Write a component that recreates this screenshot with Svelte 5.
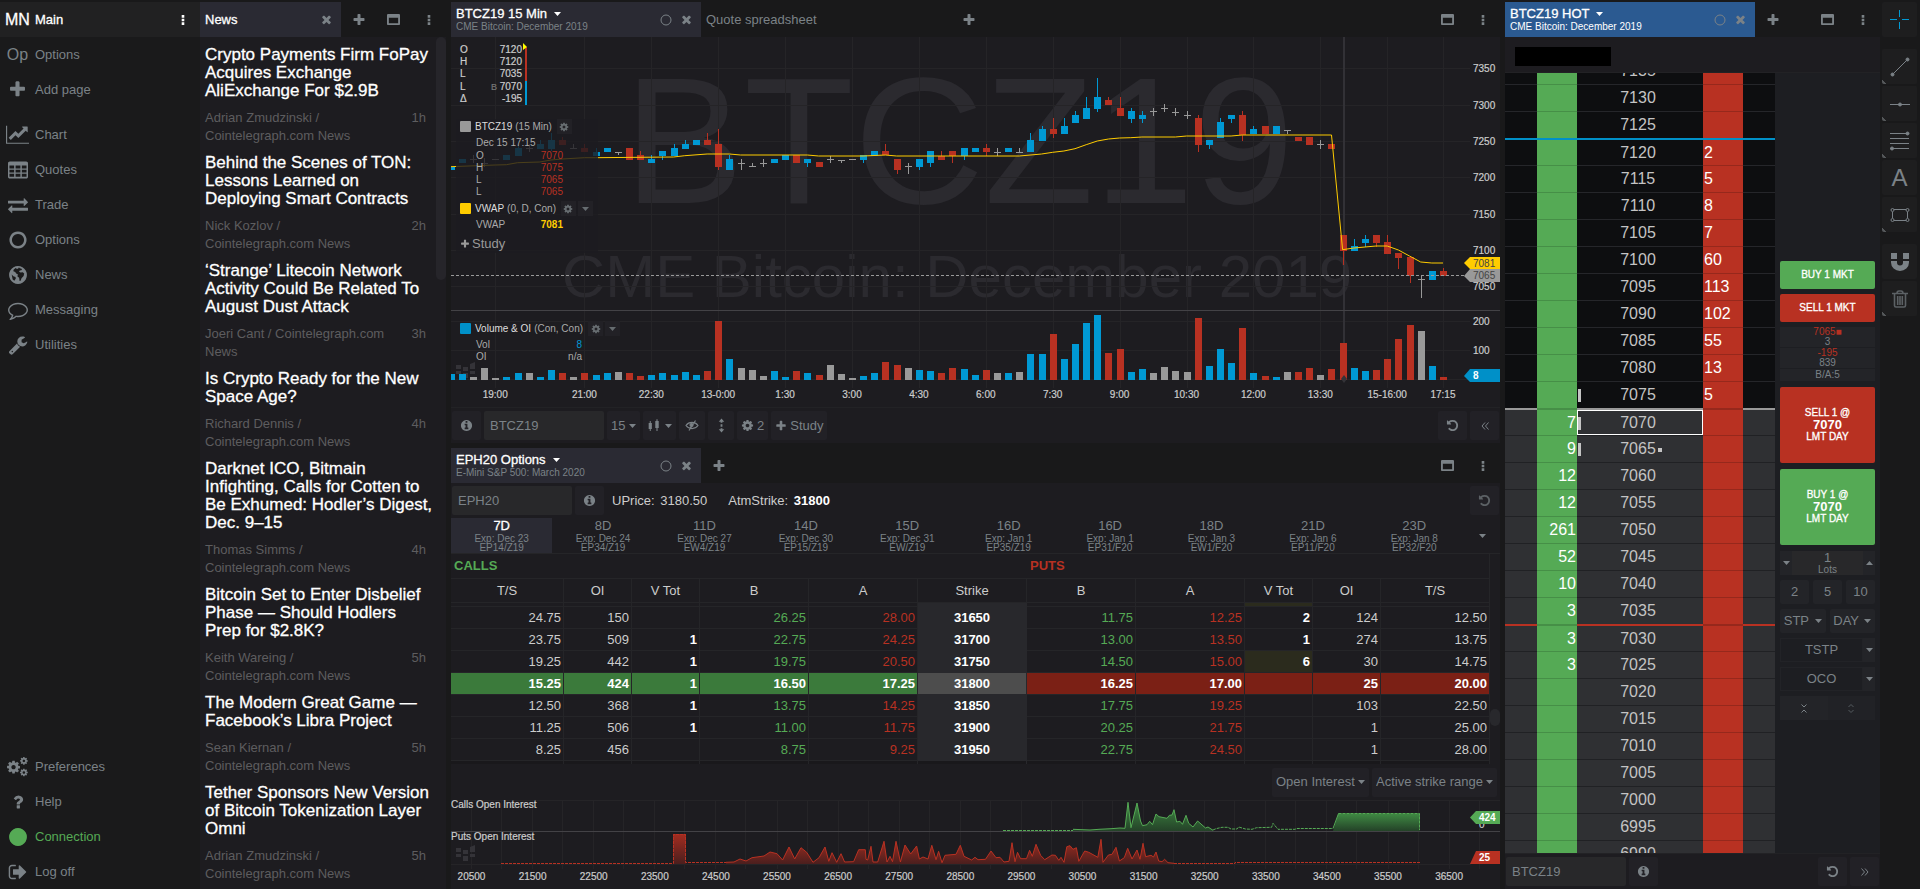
<script lang="ts">
	type Candle = { x: number; tone: string; top: number; bottom: number; high: number; low: number; vol: number };

	const icons: Record<string, string> = {
		plus: 'M1600 736v192q0 40-28 68t-68 28h-416v416q0 40-28 68t-68 28h-192q-40 0-68-28t-28-68v-416h-416q-40 0-68-28t-28-68v-192q0-40 28-68t68-28h416v-416q0-40 28-68t68-28h192q40 0 68 28t28 68v416h416q40 0 68 28t28 68z',
		times: 'M1490 1322q0 40-28 68l-136 136q-28 28-68 28t-68-28l-294-294-294 294q-28 28-68 28t-68-28l-136-136q-28-28-28-68t28-68l294-294-294-294q-28-28-28-68t28-68l136-136q28-28 68-28t68 28l294 294 294-294q28-28 68-28t68 28l136 136q28 28 28 68t-28 68l-294 294 294 294q28 28 28 68z',
		window: 'M256 1408h1280v-768h-1280v768zm1536-1120v1216q0 66-47 113t-113 47h-1472q-66 0-113-47t-47-113v-1216q0-66 47-113t113-47h1472q66 0 113 47t47 113z',
		more: 'M700 160h390v390h-390zM700 700h390v390h-390zM700 1240h390v390h-390z',
		chart: 'M1792 1530v90h-1792v-1400h90v1310zM1690 310v380q0 18-17 26t-31-7l-106-106-554 554q-9 9-20 9t-20-9l-204-204-364 364-168-168 512-512q9-9 20-9t20 9l204 204 406-406-106-106q-14-14-7-31t26-17h381q12 0 20 8t8 20z',
		table: 'M160 128h1472q66 0 113 47t47 113v1216q0 66-47 113t-113 47h-1472q-66 0-113-47t-47-113v-1216q0-66 47-113t113-47zM130 500v260h420v-260zM680 500v260h430v-260zM1240 500v260h420v-260zM130 880v240h420v-240zM680 880v240h430v-240zM1240 880v240h420v-240zM130 1240v270h420v-270zM680 1240v270h430v-270zM1240 1240v270h420v-270z',
		exchange: 'M1792 1184v192q0 13-9.5 22.5t-22.5 9.5h-1376v192q0 13-9.5 22.5t-22.5 9.5q-12 0-24-10l-319-320q-9-9-9-22 0-14 9-23l320-320q9-9 23-9 13 0 22.5 9.5t9.5 22.5v192h1376q13 0 22.5 9.5t9.5 22.5zm0-544q0 14-9 23l-320 320q-9 9-23 9-13 0-22.5-9.5t-9.5-22.5v-192h-1376q-13 0-22.5-9.5t-9.5-22.5v-192q0-13 9.5-22.5t22.5-9.5h1376v-192q0-14 9-23t23-9q12 0 24 10l319 319q9 9 9 23z',
		ring: 'M896 352q-148 0-273 73t-198 198-73 273 73 273 198 198 273 73 273-73 198-198 73-273-73-273-198-198-273-73zm768 544q0 209-103 385.5t-279.5 279.5-385.5 103-385.5-103-279.5-279.5-103-385.5 103-385.5 279.5-279.5 385.5-103 385.5 103 279.5 279.5 103 385.5z',
		globe: 'M896 96a800 800 0 1 0 .1 0zM1010 260l250 90-60 130-150 10-60 110 140 70 190-30 130 130-50 210-190 200-80 230-90 20-40-280-150-130 30-200-150-60-80-130-170-60 20-150 180-160 130 90 130-50 50-130zM330 860l150 150 190 70 30 130-130 200-150-110z',
		comment: 'M896 384q-204 0-381.5 69.5t-282 187.5-104.5 255q0 112 71.5 213.5t201.5 175.5l87 50-27 96q-24 91-70 172 152-63 275-171l43-38 57 6q69 8 130 8 204 0 381.5-69.5t282-187.5 104.5-255-104.5-255-282-187.5-381.5-69.5zm896 512q0 174-120 321.5t-326 233-450 85.5q-70 0-145-8-198 175-460 242-49 14-114 22h-5q-15 0-27-10.5t-16-27.5v-1q-3-4-.5-12t2-10 4.5-9.5l6-9 7-8.5 8-9q7-8 31-34.5t34.5-38 31-39.5 32.5-51 27-59 26-76q-157-89-247.5-220t-90.5-281q0-174 120-321.5t326-233 450-85.5 450 85.5 326 233 120 321.5z',
		wrench: 'M448 1472q0-26-19-45t-45-19-45 19-19 45 19 45 45 19 45-19 19-45zm644-420l-682 682q-37 37-90 37-52 0-91-37l-106-108q-38-36-38-90 0-53 38-91l681-681q39 98 114.5 173.5t173.5 114.5zm634-435q0 39-23 106-47 134-164.5 217.5t-258.5 83.5q-185 0-316.5-131.5t-131.5-316.5 131.5-316.5 316.5-131.5q58 0 121.5 16.5t107.5 46.5q16 11 16 28t-16 28l-293 169v224l193 107q5-3 79-48.5t135.5-81 70.5-35.5q15 0 23.5 10t8.5 25z',
		cog: 'M1152 896q0-106-75-181t-181-75-181 75-75 181 75 181 181 75 181-75 75-181zm512-109v222q0 12-8 23t-20 13l-185 28q-19 54-39 91 35 50 107 138 10 12 10 25t-9 23q-27 37-99 108t-94 71q-12 0-26-9l-138-108q-44 23-91 38-16 136-29 186-7 28-36 28h-222q-14 0-24.5-8.5t-11.5-21.5l-28-184q-49-16-90-37l-141 107q-10 9-25 9-14 0-25-11-126-114-165-168-7-10-7-23 0-12 8-23 15-21 51-66.5t54-70.5q-27-50-41-99l-183-27q-13-2-21-12.5t-8-23.5v-222q0-12 8-23t19-13l186-28q14-46 39-92-40-57-107-138-10-12-10-24 0-10 9-23 26-36 98.5-107.5t94.5-71.5q13 0 26 10l138 107q44-23 91-38 16-136 29-186 7-28 36-28h222q14 0 24.5 8.5t11.5 21.5l28 184q49 16 90 37l142-107q9-9 24-9 13 0 25 10 129 119 165 170 7 8 7 22 0 12-8 23-15 21-51 66.5t-54 70.5q26 50 41 98l183 28q13 2 21 12.5t8 23.5z',
		question: 'M1088 1256v240q0 16-12 28t-28 12h-240q-16 0-28-12t-12-28v-240q0-16 12-28t28-12h240q16 0 28 12t12 28zm316-600q0 54-15.5 101t-35 76.5-55 59.5-57.5 43.5-61 35.5q-41 23-68.5 65t-27.5 67q0 17-12 32.5t-28 15.5h-240q-15 0-25.5-18.5t-10.5-37.5v-45q0-83 65-156.5t143-108.5q59-27 84-56t25-76q0-42-46.5-74t-107.5-32q-65 0-108 29-35 25-107 115-13 16-31 16-12 0-25-8l-164-125q-13-10-15.5-25t5.5-28q160-266 464-266 80 0 161 31t146 83 106 127.5 41 158.5z',
		dot: 'M896 96a800 800 0 1 0 .1 0z',
		logoff: 'M704 1440q0 4 1 20t.5 26.5-3 23.5-10 19.5-20.5 6.5h-320q-119 0-203.5-84.5t-84.5-203.5v-704q0-119 84.5-203.5t203.5-84.5h320q13 0 22.5 9.5t9.5 22.5q0 4 1 20t.5 26.5-3 23.5-10 19.5-20.5 6.5h-320q-66 0-113 47t-47 113v704q0 66 47 113t113 47h312l11.5 1 11.5 3 8 5.5 7 9 2 13.5zm928-544q0 26-19 45l-544 544q-19 19-45 19t-45-19-19-45v-288h-448q-26 0-45-19t-19-45v-384q0-26 19-45t45-19h448v-288q0-26 19-45t45-19 45 19l544 544q19 19 19 45z',
		undo: 'M1664 896q0 156-61 298t-164 245-245 164-298 61q-172 0-327-72.5t-264-204.5q-7-10-6.5-22.5t8.5-20.5l137-138q10-9 25-9 16 2 23 12 73 95 179 147t225 52q104 0 198.5-40.5t163.5-109.5 109.5-163.5 40.5-198.5-40.5-198.5-109.5-163.5-163.5-109.5-198.5-40.5q-98 0-188 35.5t-160 101.5l137 138q31 30 14 69-17 40-59 40h-448q-26 0-45-19t-19-45v-448q0-42 40-59 39-17 69 14l130 129q107-101 244.5-156.5t284.5-55.5q156 0 298 61t245 164 164 245 61 298z',
		info: 'M1152 1376v-160q0-14-9-23t-23-9h-96v-512q0-14-9-23t-23-9h-320q-14 0-23 9t-9 23v160q0 14 9 23t23 9h96v320h-96q-14 0-23 9t-9 23v160q0 14 9 23t23 9h448q14 0 23-9t9-23zm-128-896v-160q0-14-9-23t-23-9h-192q-14 0-23 9t-9 23v160q0 14 9 23t23 9h192q14 0 23-9t9-23zm640 416q0 209-103 385.5t-279.5 279.5-385.5 103-385.5-103-279.5-279.5-103-385.5 103-385.5 279.5-279.5 385.5-103 385.5 103 279.5 279.5 103 385.5z',
		bars: 'M330 350h120v250h130v700h-130v250h-120v-250h-130v-700h130zM1130 150h130v200h140v850h-140v350h-130v-350h-140v-850h140z',
		updown: 'M896 60l330 380h-220v140h-220v-140h-220zM786 760h220v280h-220zM786 1210h220v140h220l-330 380-330-380h220z'
	};

	const pages = [
		{ icon: 'chart', label: 'Chart' },
		{ icon: 'table', label: 'Quotes' },
		{ icon: 'exchange', label: 'Trade' },
		{ icon: 'ring', label: 'Options' },
		{ icon: 'globe', label: 'News' },
		{ icon: 'comment', label: 'Messaging' },
		{ icon: 'wrench', label: 'Utilities' }
	];

	const news = [
		['Crypto Payments Firm FoPay Acquires Exchange AliExchange For $2.9B', 'Adrian Zmudzinski', '1h'],
		['Behind the Scenes of TON: Lessons Learned on Deploying Smart Contracts', 'Nick Kozlov', '2h'],
		['‘Strange’ Litecoin Network Activity Could Be Related To August Dust Attack', 'Joeri Cant', '3h'],
		['Is Crypto Ready for the New Space Age?', 'Richard Dennis', '4h'],
		['Darknet ICO, Bitmain Infighting, Calls for Cotten to Be Exhumed: Hodler’s Digest, Dec. 9–15', 'Thomas Simms', '4h'],
		['Bitcoin Set to Enter Disbelief Phase — Should Hodlers Prep for $2.8K?', 'Keith Wareing', '5h'],
		['The Modern Great Game — Facebook’s Libra Project', 'Sean Kiernan', '5h'],
		['Tether Sponsors New Version of Bitcoin Tokenization Layer Omni', 'Adrian Zmudzinski', '5h']
	];

	// tone, body top, body bottom, wick high, wick low, volume top; levels are in thirds of a pixel
	const raw = `b 500 510 500 510 1122|b 477 489 477 489 1122|g 478 478 466 490 1131|g 488 488 475 500 1104|g 478 478 478 478 1134
|b 466 479 466 479 1131|b 444 468 435 468 1119|g 445 445 432 456 1119|b 432 446 420 446 1131|b 420 447 400 453 1110
|r 420 434 412 434 1119|g 444 444 432 444 1131|r 444 456 432 456 1119|b 455 468 444 468 1125|b 444 456 444 456 1119
|g 455 455 455 466 1116|r 444 480 444 480 1119|r 466 479 454 479 1128|b 477 489 466 489 1125|b 453 468 453 480 1119
|b 444 468 432 468 1125|b 432 447 420 447 1116|b 420 435 420 435 1125|r 420 435 399 435 1113|r 432 500 387 510 963
|b 477 510 466 510 1077|g 488 488 478 510 1104|g 499 499 488 499 1110|g 488 488 478 500 1128|b 477 489 477 489 1113
|b 466 480 466 480 1131|r 466 489 466 489 1113|b 477 489 477 501 1119|r 487 501 487 501 1125|g 478 478 467 489 1095
|g 479 479 479 488 1122|g 478 478 478 478 1134|b 466 480 466 489 1128|b 453 467 453 467 1119|r 453 466 432 466 1086
|r 477 510 477 521 1095|g 499 499 488 521 1104|b 477 500 477 510 1110|b 453 489 453 500 1113|r 467 480 454 480 1119
|r 453 467 453 489 1104|b 444 467 444 480 1107|b 444 456 444 456 1125|r 444 456 432 467 1110|g 455 455 444 467 1119
|b 444 456 444 456 1119|g 455 455 444 455 1116|b 420 456 399 456 1062|b 387 423 378 423 1062|r 387 402 354 414 1002
|b 378 402 354 402 1077|b 345 369 333 369 1032|b 324 357 291 357 969|b 291 327 234 336 945|r 300 315 291 315 1059
|r 324 348 291 348 1047|b 333 357 324 369 1116|b 345 357 333 369 1107|g 334 334 324 347 1119|g 324 324 312 335 1101
|g 335 335 324 347 1113|g 346 346 333 357 1116|r 354 435 345 456 954|b 420 435 420 447 1098|b 366 414 354 414 1047
|b 345 357 345 369 1089|r 345 405 333 423 984|b 387 402 378 402 1119|r 378 402 378 402 1128|b 378 402 378 402 1131
|g 389 389 389 402 1116|r 411 423 411 423 1116|r 411 435 411 435 1104|g 433 433 421 447 1125|r 432 447 432 447 1107
|r 705 753 705 795 1029|b 738 753 717 753 1104|b 717 729 705 740 1113|r 705 729 705 740 1110|r 726 762 705 762 1077
|r 759 774 759 807 1017|r 771 828 771 849 975|g 838 838 826 894 993|b 813 840 813 840 1098|r 813 828 804 828 1131`;

	const slot = (i: number) => 44.2 + 11.15 * i;
	const level = (v: number) => Math.round(v / 3) - 37;

	const candles: Candle[] = raw.split('|').map((row, n) => {
		const [tone, ...v] = row.trim().split(' ');
		const [top, bottom, high, low, vol] = v.map((s) => level(Number(s)));
		return { x: Math.round(slot(n - 4)), tone, top, bottom, high, low, vol };
	});

	const vwap = [
		[-4, 500], [0, 495], [1, 494], [2, 488], [4, 486], [5, 480], [6, 477], [8, 473], [9, 473], [16, 471], [17, 467], [19, 462],
		[21, 462], [22, 465], [28, 465], [29, 468], [33, 468], [35, 465], [36, 468], [47, 468], [49, 462], [50, 457], [51, 453],
		[52, 446], [53, 434], [54, 423], [55, 417], [56, 414], [57, 413], [58, 411], [61, 411], [62, 408], [66, 408], [67, 405],
		[75, 405], [76, 749], [77, 744], [79, 738], [80, 738], [81, 750], [82, 768], [83, 786], [84, 789], [85, 789]
	]
		.map(([i, v]) => `${slot(i).toFixed(1)},${(v / 3 - 37).toFixed(1)}`)
		.join(' ');

	const times: [string, number][] = [
		['19:00', 0], ['21:00', 8], ['22:30', 14], ['13-0:00', 20], ['1:30', 26], ['3:00', 32], ['4:30', 38], ['6:00', 44],
		['7:30', 50], ['9:00', 56], ['10:30', 62], ['12:00', 68], ['13:30', 74], ['15-16:00', 80], ['17:15', 85]
	];
	const prices = [7350, 7300, 7250, 7200, 7150, 7100, 7050];

	const expiries = [
		['7D', 'Dec 23', 'EP14/Z19'], ['8D', 'Dec 24', 'EP34/Z19'], ['11D', 'Dec 27', 'EW4/Z19'], ['14D', 'Dec 30', 'EP15/Z19'],
		['15D', 'Dec 31', 'EW/Z19'], ['16D', 'Jan 1', 'EP35/Z19'], ['16D', 'Jan 1', 'EP31/F20'], ['18D', 'Jan 3', 'EW1/F20'],
		['21D', 'Jan 6', 'EP11/F20'], ['23D', 'Jan 8', 'EP32/F20']
	];

	const heads = ['T/S', 'OI', 'V Tot', 'B', 'A', 'Strike', 'B', 'A', 'V Tot', 'OI', 'T/S'];
	const kinds = ['', '', 'vol', 'bid', 'ask', 'strike', 'bid', 'ask', 'vol', '', ''];
	const chain = [
		['24.75', '150', '', '26.25', '28.00', '31650', '11.75', '12.25', '2', '124', '12.50'],
		['23.75', '509', '1', '22.75', '24.25', '31700', '13.00', '13.50', '1', '274', '13.75'],
		['19.25', '442', '1', '19.75', '20.50', '31750', '14.50', '15.00', '6', '30', '14.75'],
		['15.25', '424', '1', '16.50', '17.25', '31800', '16.25', '17.00', '', '25', '20.00'],
		['12.50', '368', '1', '13.75', '14.25', '31850', '17.75', '19.25', '', '103', '22.50'],
		['11.25', '506', '1', '11.00', '11.75', '31900', '20.25', '21.75', '', '1', '25.00'],
		['8.25', '456', '', '8.75', '9.25', '31950', '22.75', '24.50', '', '1', '28.00']
	];

	const callsDash = '552,30.5 622,30.5';
	const callsLine =
		'622,29.3 639,30 648,29.3 660,28.7 669,28 674,28.3 677,2.3 680,27.7 686,3 689.5,21 691.5,25.7 696,24.7 698.7,21.3 701.5,24.7 705,14 708,16.7 716,18.3 718.4,15.3 721,15 723,9.7 725.6,22 729,21.3 731.5,24.3 735,15.3 737.7,23.3 742,27 746.6,21 754.5,28 757,27 762,30.3';
	const callsDash2 =
		'762,30 765,28.7 771,27.3 777,27.3 780,29 786,29 787.6,27 794.5,29 801,29.3 805.5,27.7 820.6,27.3 822,23.3 827,29.3 844,29.3 846,28.5 882,28.5';
	const putsDash = '50,63.5 222.5,63.5 222.5,34.5 234.5,34.5 234.5,62.5 275,62.5';
	const putsLine =
		'275,62.3 283,62 289,59 295,61 301,57.7 313,56 319,52 326,53.7 331.6,60 338,47 343.7,59 350,47.7 355.7,52.3 362,62.3 368,57.7 374,47 377.8,61.3 381,52.7 385.7,62.3 390,53.7 393.6,62 402.6,61.7 407.7,49.7 414.3,49.7 415,59.3 416.7,60 420,46.3 422,62 426.7,62 433,41.3 436,62 439,56.3 441.5,61.7 445,41.3 449.4,62 454,45 459.7,54 465.6,46 468.4,59 472,57 477,59 480.8,45.3 485,59.7 487.6,51.3 491,62.7 494,55.3 505,54.3 509.3,45.3 513,56.3 520.7,60 524,57.3 527,59.7 534.5,59.3 540,51 545,57.7 549,57.3 553,62 558,61.3 561,42.7 564,61.7 566.5,52.3 569.6,58.7 575.5,58.7 578.6,50.3 581.3,56.3 585,44.3 589.6,55.3 593.7,59.7 601,55 604.4,55.3 607.8,60.3 610,57.3 613,62.3 615.8,46.7 619,45.7 622,49.3 625.4,47.7 627.8,61.3 633.7,51 637.8,52.3 645,56.3 646.8,57.3 650,39.3 652,62.3 657.4,55 661,54.3 665,47.3 668.4,61 673.3,57.7 676.7,48.3 681,59 686,50 689,59.3 692,43.3 694.6,56.7 700,55.3 702.5,57 705,52 707.7,61 711,61.7 713.6,59.3 717,62.7 723,63.3';
	const strikes = Array.from({ length: 17 }, (_, k) => 20500 + k * 1000);

	const asks: Record<number, string> = { 7120: '2', 7115: '5', 7110: '8', 7105: '7', 7100: '60', 7095: '113', 7090: '102', 7085: '55', 7080: '13', 7075: '5' };
	const bids: Record<number, string> = { 7070: '7', 7065: '9', 7060: '12', 7055: '12', 7050: '261', 7045: '52', 7040: '10', 7035: '3', 7030: '3', 7025: '3' };
	const ladder = Array.from({ length: 30 }, (_, k) => 7135 - k * 5);
</script>

{#snippet icon(name: string, size: number)}
	<svg class="icon" width={size} height={size} viewBox="0 0 1792 1792" aria-hidden="true">
		<path d={icons[name]} fill="currentColor" fill-rule="evenodd" />
	</svg>
{/snippet}

{#snippet cogs()}
	<svg class="icon" width="22" height="20" viewBox="0 0 22 20" fill="currentColor" fill-rule="evenodd" aria-hidden="true">
		<path transform="translate(-1 2.6) scale(.0084)" d={icons.cog} />
		<path transform="translate(12.4 -.6) scale(.005)" d={icons.cog} />
		<path transform="translate(12.4 11) scale(.005)" d={icons.cog} />
	</svg>
{/snippet}

{#snippet caret()}
	<svg class="icon" width="7" height="4" viewBox="0 0 7 4" aria-hidden="true"><path d="M0 0h7L3.500 4z" fill="currentColor" /></svg>
{/snippet}

{#snippet iconButton(name: string, label: string, size = 14)}
	<button class="head-btn" aria-label={label}>{@render icon(name, size)}</button>
{/snippet}

{#snippet symbolTab(title: string, sub: string, active: boolean)}
	<div class="tab" class:active>
		<button class="symbol-name">
			<span class="title">{title} {@render caret()}</span>
			<span class="sub">{sub}</span>
		</button>
		<button class="bare" aria-label="Link colour">
			<svg class="icon" width="12" height="12" viewBox="0 0 12 12"><circle cx="6" cy="6" r="5" fill="none" stroke="currentColor" /></svg>
		</button>
		<button class="bare" aria-label="Close">{@render icon('times', 13)}</button>
	</div>
{/snippet}

{#snippet mark(x: number, y: number)}
	<path class="mark" transform="translate({x} {y})" d="M0 2h5v4H0zM0 8h5v3H0zM7 4h5v4H7zM7 10h5v5H7zM14 1l5-2v7h-5zM14 8h5v3h-5z" />
{/snippet}

<div class="app">
	<nav class="sidebar">
		<div class="side-head">
			<span class="badge">MN</span>
			<span>Main</span>
			<button class="head-btn light" aria-label="Page menu">{@render icon('more', 12)}</button>
		</div>
		<a class="side-link" href="#options"><span class="side-icon abbr">Op</span>Options</a>
		<a class="side-link" href="#add"><span class="side-icon">{@render icon('plus', 19)}</span>Add page</a>
		<div class="side-gap"></div>
		{#each pages as page}
			<a class="side-link" href="#page"><span class="side-icon">{@render icon(page.icon, page.icon === 'chart' ? 23 : 20)}</span>{page.label}</a>
		{/each}
		<div class="spacer"></div>
		<a class="side-link" href="#prefs"><span class="side-icon">{@render cogs()}</span>Preferences</a>
		<a class="side-link" href="#help"><span class="side-icon">{@render icon('question', 18)}</span>Help</a>
		<a class="side-link online" href="#connection"><span class="side-icon">{@render icon('dot', 20)}</span>Connection</a>
		<a class="side-link" href="#logoff"><span class="side-icon">{@render icon('logoff', 20)}</span>Log off</a>
	</nav>

	<section class="news">
		<header class="head">
			<div class="tab grow"><span class="title">News</span><button class="bare" aria-label="Close">{@render icon('times', 13)}</button></div>
			{@render iconButton('plus', 'Add tab')}
			{@render iconButton('window', 'Pop out', 13)}
			{@render iconButton('more', 'Menu', 12)}
		</header>
		<div class="feed">
			<div class="articles">
				{#each news as [title, author, age]}
					<article>
						<h2>{title}</h2>
						<p class="meta"><span class="source">{author} / Cointelegraph.com News</span><time>{age}</time></p>
					</article>
				{/each}
			</div>
			<div class="scrollbar"></div>
		</div>
	</section>

	<main class="center">
		<section class="panel">
			<header class="head">
				{@render symbolTab('BTCZ19 15 Min', 'CME Bitcoin: December 2019', false)}
				<button class="tab idle">Quote spreadsheet</button>
				{@render iconButton('plus', 'Add tab')}
				<span class="spacer"></span>
				{@render iconButton('window', 'Pop out', 13)}
				{@render iconButton('more', 'Menu', 12)}
			</header>

			<div class="plot">
				<svg class="plot-svg" viewBox="0 0 1049 370">
					<text class="wm big" x="508" y="166">BTCZ19</text>
					<text class="wm small" x="506" y="260">CME Bitcoin: December 2019</text>
					{#each times as [label, i]}
						<line class="grid" x1={Math.round(slot(i)) + 0.5} x2={Math.round(slot(i)) + 0.5} y1="0" y2="351" />
						<text class="axis mid" x={slot(i)} y="361">{label}</text>
					{/each}
					{#each prices as p, k}
						{@const y = Math.round(31.4 + k * 36.33)}
						<line class="grid" x1="0" x2="1019" y1={y + 0.5} y2={y + 0.5} />
						<text class="axis" x="1022" y={y + 4}>{p}</text>
					{/each}
					<line class="grid" x1="0" x2="1019" y1="284.5" y2="284.5" />
					<text class="axis" x="1022" y="288">200</text>
					<line class="grid" x1="0" x2="1019" y1="313.5" y2="313.5" />
					<text class="axis" x="1022" y="317">100</text>
					<line class="grid" x1="0" x2="1019" y1="342.5" y2="342.5" />
					<line class="session" x1="893" x2="893" y1="0" y2="341" />
					<line class="divide" x1="0" x2="1049" y1="273.5" y2="273.5" />
					{@render mark(5, 326)}
					{#each candles as c}
						<g class={c.tone}>
							<rect x={c.x} y={c.high} width="1" height={Math.max(1, c.low - c.high)} />
							<rect x={c.x - 3} y={c.top} width="7" height={Math.max(1, c.bottom - c.top)} />
							<rect x={c.x - 3} y={c.vol} width="7" height={343 - c.vol} />
						</g>
					{/each}
					<path class="pin" d="M893 338l3 4-3 4-3-4z" />
					<polyline class="vwap" points={vwap} />
					<line class="last" x1="0" x2="1013" y1="238.5" y2="238.5" />
					<path fill="#ffcc00" d="M1013 226l6-6h30v12h-30z" />
					<path fill="#999" d="M1013 239l6-7h30v13h-30z" />
					<path fill="#0090c8" d="M1013 339l6-7h30v13h-30z" />
					<text class="axis tag" x="1022" y="230">7081</text>
					<text class="axis tag" x="1022" y="242">7065</text>
					<text class="axis hot" x="1022" y="342">8</text>
				</svg>

				<div class="overlay">
					<dl class="quote">
						<dt>O</dt><dd>7120</dd>
						<dt>H</dt><dd>7120</dd>
						<dt>L</dt><dd>7035</dd>
						<dt>L</dt><dd><small>B</small> 7070</dd>
						<dt>Δ</dt><dd>-195</dd>
					</dl>
					<svg class="range" width="6" height="62" viewBox="0 0 6 62"><path fill="#b83122" d="M3 4h2v34H3z" /><path fill="#0099d4" d="M3 38h2v24H3z" /><path fill="#ff0" d="M1 0l4 4-4 3z" /></svg>
				</div>
				<div class="overlay legend prime">
					<div class="legend-head"><i class="swatch"></i><b>BTCZ19</b> (15 Min) <button class="mini" aria-label="Series settings">{@render icon('cog', 10)}</button></div>
					<div class="legend-date">Dec 15 17:15</div>
					<dl class="values loss"><dt>O</dt><dd>7070</dd><dt>H</dt><dd>7075</dd><dt>L</dt><dd>7065</dd><dt>L</dt><dd>7065</dd></dl>
					<div class="legend-head second"><i class="swatch gold"></i><b>VWAP</b> (0, D, Con) <button class="mini" aria-label="VWAP settings">{@render icon('cog', 10)}</button><button class="mini" aria-label="VWAP menu">{@render caret()}</button></div>
					<dl class="values amber"><dt>VWAP</dt><dd>7081</dd></dl>
					<button class="bare study">{@render icon('plus', 10)} Study</button>
				</div>
				<div class="overlay legend volume">
					<div class="legend-head"><i class="swatch blue"></i><b>Volume &amp; OI</b> (Con, Con) <button class="mini" aria-label="Volume settings">{@render icon('cog', 10)}</button><button class="mini" aria-label="Volume menu">{@render caret()}</button></div>
					<dl class="values wide"><dt>Vol</dt><dd class="cyan">8</dd><dt>OI</dt><dd>n/a</dd></dl>
				</div>
			</div>

			<footer class="bar">
				<button class="btn square" aria-label="Symbol info">{@render icon('info', 13)}</button>
				<input class="field" aria-label="Symbol" value="BTCZ19" />
				<span class="btn drop"><select aria-label="Interval"><option>15</option></select>{@render caret()}</span>
				<button class="btn" aria-label="Chart type">{@render icon('bars', 15)}{@render caret()}</button>
				<button class="btn" aria-label="Hide drawings">
					<svg class="icon" width="14" height="11" viewBox="0 0 14 11" fill="none" stroke="currentColor" stroke-width="1.2"><path d="M1 5.5C4 1.400 10 1.400 13 5.500 10 9.600 4 9.600 1 5.500zM10.500 .5L4 10.500" /><circle cx="6.500" cy="5" r="1.500" fill="currentColor" /></svg>
				</button>
				<button class="btn" aria-label="Auto scale">{@render icon('updown', 15)}</button>
				<button class="btn">{@render icon('cog', 13)} 2</button>
				<button class="btn">{@render icon('plus', 12)} Study</button>
				<span class="spacer"></span>
				<button class="btn square" aria-label="Reset">{@render icon('undo', 13)}</button>
				<button class="btn square" aria-label="Collapse"><svg class="icon" width="8" height="8" viewBox="0 0 8 8" fill="none" stroke="currentColor"><path d="M4 .5L1 4l3 3.500M7.500 .5l-3 3.500 3 3.500" /></svg></button>
			</footer>
		</section>

		<section class="panel">
			<header class="head">
				{@render symbolTab('EPH20 Options', 'E-Mini S&P 500: March 2020', false)}
				{@render iconButton('plus', 'Add tab')}
				<span class="spacer"></span>
				{@render iconButton('window', 'Pop out', 13)}
				{@render iconButton('more', 'Menu', 12)}
			</header>
			<div class="bar top">
				<input class="field" aria-label="Options symbol" value="EPH20" />
				<button class="btn square" aria-label="Symbol info">{@render icon('info', 13)}</button>
				<span class="stat">UPrice: <span>3180.50</span></span>
				<span class="stat">AtmStrike: <strong>31800</strong></span>
				<span class="spacer"></span>
				<button class="btn square faint" aria-label="Reset">{@render icon('undo', 13)}</button>
			</div>
			<div class="expiries">
				{#each expiries as [days, date, code], k}
					<button class="expiry" class:current={k === 0}><span class="days">{days}</span><span>Exp: {date}</span><span>{code}</span></button>
				{/each}
				<button class="expiry-more" aria-label="More expirations">{@render caret()}</button>
			</div>

			<div class="chain-wrap">
				<table class="chain">
					<colgroup>
						<col class="first" /><col class="narrow" /><col class="narrow" /><col /><col /><col /><col /><col /><col class="narrow" /><col class="narrow" /><col />
					</colgroup>
					<thead>
						<tr class="sides"><th class="calls" colspan="6">CALLS</th><th class="puts" colspan="5">PUTS</th></tr>
						<tr>{#each heads as h}<th>{h}</th>{/each}</tr>
					</thead>
					<tbody>
						<tr class="peek">{#each kinds as kind, k}<td class={kind} class:busy={k === 8}></td>{/each}</tr>
						{#each chain as row}
							<tr class:atm={row[5] === '31800'}>
								{#each row as cell, k}
									<td class={kinds[k]} class:call={k < 5} class:put={k > 5} class:busy={k === 8 && cell === '6'}>{cell}</td>
								{/each}
							</tr>
						{/each}
						<tr class="peek tail">{#each kinds as kind}<td class={kind}></td>{/each}</tr>
					</tbody>
				</table>
				<div class="thumb"></div>
			</div>

			<div class="bar filters">
				<span class="btn drop"><select aria-label="Chart metric"><option>Open Interest</option></select>{@render caret()}</span>
				<span class="btn drop"><select aria-label="Strike range"><option>Active strike range</option></select>{@render caret()}</span>
			</div>
			<svg class="interest" viewBox="0 0 1049 89">
				<defs>
					<linearGradient id="calls" x1="0" y1="0" x2="0" y2="1"><stop offset="0" stop-color="#3f8a43" /><stop offset="1" stop-color="#244228" /></linearGradient>
					<linearGradient id="puts" x1="0" y1="0" x2="0" y2="1"><stop offset="0" stop-color="#a32c20" /><stop offset="1" stop-color="#4a1f1e" /></linearGradient>
				</defs>
				<line class="grid" x1="0" x2="1049" y1="0.5" y2="0.5" />
				<line class="grid" x1="0" x2="1020" y1="64.5" y2="64.5" />
				{#each strikes as s, k}
					<line class="grid" x1={Math.round(20 + 61.1 * k) + 0.5} x2={Math.round(20 + 61.1 * k) + 0.5} y1="0" y2="69" />
					<line class="grid" x1={Math.round(50 + 61.1 * k) + 0.5} x2={Math.round(50 + 61.1 * k) + 0.5} y1="0" y2="69" />
					<text class="axis mid" x={20.5 + 61.1 * k} y="80">{s}</text>
				{/each}
				<line class="divide" x1="0" x2="1049" y1="31.5" y2="31.5" />
				<polygon fill="url(#calls)" points="622,31 {callsLine} 762,31" />
				<polygon fill="url(#calls)" points="882,31 887.5,13.5 969,13.5 969,31" />
				<polyline class="up dash" points={callsDash} />
				<polyline class="up" points={callsLine} />
				<polyline class="up dash" points={callsDash2} />
				<polyline class="up" points="882,28.5 887.5,13.5" />
				<polyline class="up dash" points="887.5,13.5 968.5,13.5 968.5,30" />
				<rect x="222" y="34" width="13" height="30" fill="url(#puts)" />
				<polygon fill="url(#puts)" points="275,64 {putsLine} 723,64" />
				<polyline class="down dash" points={putsDash} />
				<polyline class="down" points={putsLine} />
				<polyline class="down dash" points="723,63.5 784,63.5 784,62.5 969,62.5" />
				{@render mark(5, 46)}
				<text class="axis" x="0" y="8">Calls Open Interest</text>
				<text class="axis" x="0" y="40">Puts Open Interest</text>
				<text class="axis" x="1028" y="28">0</text>
				<path fill="#55aa55" d="M1019 17.500l6-6.500h24v13h-24z" />
				<path fill="#b83122" d="M1019 64l6-13h24v13z" />
				<text class="axis hot" x="1028" y="21">424</text>
				<text class="axis hot" x="1028" y="61">25</text>
			</svg>
		</section>
	</main>

	<section class="dom">
		<header class="head">
			{@render symbolTab('BTCZ19 HOT', 'CME Bitcoin: December 2019', true)}
			{@render iconButton('plus', 'Add tab')}
			<span class="spacer"></span>
			{@render iconButton('window', 'Pop out', 13)}
			{@render iconButton('more', 'Menu', 12)}
		</header>
		<div class="account"><div class="redacted"></div></div>
		<div class="dom-body">
			<div class="ladder-wrap">
				<table class="ladder">
					<colgroup><col class="w32" /><col class="w40" /><col /><col class="w40" /><col class="w32" /></colgroup>
					<tbody>
						{#each ladder as p}
							<tr class:below={p <= 7070} class:high={p === 7120} class:split={p === 7070} class:low={p === 7030}>
								<td></td>
								<td class="bidq">{bids[p] ?? ''}</td>
								<td class="price" class:traded={p >= 7065 && p <= 7075} class:box={p === 7070} class:recent={p === 7065}><span>{p}</span></td>
								<td class="askq">{asks[p] ?? ''}</td>
								<td></td>
							</tr>
						{/each}
					</tbody>
				</table>
			</div>
			<div class="ticket">
				<button class="order buy">BUY 1 MKT</button>
				<button class="order sell">SELL 1 MKT</button>
				<div class="facts">
					<div><span class="neg">7065■</span><span>3</span></div>
					<div><span class="neg">-195</span><span>839</span></div>
					<div><span>B/A:5</span></div>
				</div>
				<button class="order tall sell">SELL 1 @<strong>7070</strong>LMT DAY</button>
				<button class="order tall buy">BUY 1 @<strong>7070</strong>LMT DAY</button>
				<div class="lots">
					<button class="step" aria-label="Fewer lots">{@render caret()}</button>
					<div class="lots-box"><input id="lots" value="1" /><label for="lots">Lots</label></div>
					<button class="step raise" aria-label="More lots">{@render caret()}</button>
				</div>
				<div class="row">
					<button class="cell">2</button><button class="cell">5</button><button class="cell">10</button>
				</div>
				<div class="row">
					<span class="cell"><select aria-label="Stop type"><option>STP</option></select>{@render caret()}</span>
					<span class="cell"><select aria-label="Time in force"><option>DAY</option></select>{@render caret()}</span>
				</div>
				<div class="combo"><button class="main">TSTP</button><button class="step" aria-label="TSTP menu">{@render caret()}</button></div>
				<div class="combo"><button class="main">OCO</button><button class="step" aria-label="OCO menu">{@render caret()}</button></div>
				<div class="combo">
					<button class="half" aria-label="Center ladder"><svg class="icon" width="6" height="9" viewBox="0 0 6 9" fill="none" stroke="currentColor"><path d="M.5 .5L3 3 5.500 .5M.5 8.500L3 6l2.500 2.500" /></svg></button>
					<button class="half dim" aria-label="Expand ladder"><svg class="icon" width="6" height="9" viewBox="0 0 6 9" fill="none" stroke="currentColor"><path d="M.5 3L3 .5 5.500 3M.5 6L3 8.500 5.500 6" /></svg></button>
				</div>
			</div>
		</div>
		<footer class="bar">
			<input class="field" aria-label="Ladder symbol" value="BTCZ19" />
			<button class="btn square" aria-label="Symbol info">{@render icon('info', 13)}</button>
			<span class="spacer"></span>
			<button class="btn square" aria-label="Reset">{@render icon('undo', 13)}</button>
			<button class="btn square" aria-label="Expand"><svg class="icon" width="8" height="8" viewBox="0 0 8 8" fill="none" stroke="currentColor"><path d="M.5 .5l3 3.500-3 3.500M4 .5L7 4 4 7.500" /></svg></button>
		</footer>
	</section>

	<aside class="tools">
		<button class="tool cyan" aria-label="Crosshair"><svg width="19" height="19" viewBox="0 0 19 19" stroke="currentColor" fill="none"><path d="M9.500 0v7M9.500 12v7M0 9.500h7M12 9.500h7" /></svg></button>
		<div class="tool-group">
			<button class="tool more" aria-label="Trend line"><svg width="20" height="20" viewBox="0 0 20 20" stroke="currentColor" fill="currentColor"><path d="M2.500 17.500l15-15" /><circle cx="2.500" cy="17.500" r="1.500" /><circle cx="17.500" cy="2.500" r="1.500" /></svg></button>
			<button class="tool more" aria-label="Horizontal line"><svg width="20" height="20" viewBox="0 0 20 20" stroke="currentColor" fill="currentColor"><path d="M0 10.500h20" /><circle cx="10" cy="10.500" r="1.500" /></svg></button>
			<button class="tool more" aria-label="Retracement"><svg width="20" height="20" viewBox="0 0 20 20" stroke="currentColor" fill="currentColor"><path d="M0 2.500h19M0 7.500h19M0 12.500h19M0 17.500h19" /><circle cx="17.500" cy="2.500" r="1.500" /><circle cx="2" cy="17.500" r="1.500" /></svg></button>
			<button class="tool letter" aria-label="Text label">A</button>
			<button class="tool more" aria-label="Rectangle"><svg width="20" height="16" viewBox="0 0 20 16" stroke="currentColor" fill="none"><path d="M4 2.500h12M4 13.500h12M2.500 5v6M17.500 5v6" /><circle cx="2.500" cy="3" r="1.500" /><circle cx="17.500" cy="3" r="1.500" /><circle cx="2.500" cy="13" r="1.500" /><circle cx="17.500" cy="13" r="1.500" /></svg></button>
		</div>
		<div class="tool-group">
			<button class="tool" aria-label="Snap"><svg width="18" height="18" viewBox="0 0 18 18" fill="currentColor"><path d="M0 0h6v6H0zM12 0h6v6h-6zM0 8h6v1.500a3 3 0 0 0 6 0V8h6v1.500a9 8.500 0 0 1-18 0z" /></svg></button>
			<button class="tool more faint" aria-label="Delete drawings"><svg width="16" height="18" viewBox="0 0 16 18" fill="none" stroke="currentColor" stroke-width="1.600"><path d="M0 3.500h16M2.500 4v11.500q0 1.500 1.500 1.500h8q1.500 0 1.500-1.500V4M5 3.500Q5 1 7 1h2q2 0 2 2.500M5.700 6v9M8 6v9M10.300 6v9" /></svg></button>
		</div>
	</aside>
</div>

<style>
	:global(body) {
		background: #19191a;
	}

	.app {
		display: flex;
		height: 100vh;
		box-sizing: border-box;
		padding-top: 2px;
		overflow: hidden;
		background: #19191a;
		color: #7b8287;
		font: 13px/18px 'Liberation Sans', Arial, sans-serif;
	}

	button,
	input,
	select {
		margin: 0;
		padding: 0;
		border: 0;
		border-radius: 0;
		background: none;
		color: inherit;
		font: inherit;
		outline: 0;
	}

	select {
		appearance: none;
		cursor: pointer;
	}

	.icon {
		flex: none;
		display: block;
	}

	.spacer {
		flex: 1;
	}

	/* sidebar */
	.sidebar {
		flex: 0 0 200px;
		display: flex;
		flex-direction: column;
		background: #1a1a1b;
	}

	.side-head {
		display: flex;
		align-items: center;
		height: 35px;
		background: #212122;
		color: #fff;
		-webkit-text-stroke: 0.3px;
	}

	.badge {
		width: 30px;
		padding-left: 5px;
		font-size: 16px;
	}

	.head-btn {
		flex: 0 0 35px;
		height: 35px;
		display: flex;
		align-items: center;
		justify-content: center;
		color: #7b8287;
	}

	.head-btn.light {
		margin-left: auto;
		color: #fff;
	}

	.side-link {
		display: flex;
		align-items: center;
		height: 35px;
		color: #7b8287;
		text-decoration: none;
	}

	.side-icon {
		width: 35px;
		display: flex;
		justify-content: center;
	}

	.abbr {
		font-size: 16px;
	}

	.side-gap {
		height: 10px;
	}

	.online {
		color: #55aa55;
	}

	/* panel headers */
	.head {
		display: flex;
		flex: 0 0 35px;
		background: #19191a;
	}

	.tab {
		display: flex;
		align-items: center;
		box-sizing: border-box;
		flex: 0 0 250px;
		padding: 0 8px 0 5px;
		background: #2a2a33;
		color: #7b8287;
	}

	.tab.grow {
		flex: 1;
		justify-content: space-between;
	}

	.tab.idle {
		background: none;
	}

	.tab.active {
		background: #2b5a91;
	}

	.title {
		display: flex;
		align-items: center;
		gap: 7px;
		color: #fff;
		line-height: 15px;
		-webkit-text-stroke: 0.3px;
	}

	.symbol-name {
		flex: 1;
		text-align: left;
	}

	.sub {
		display: block;
		font-size: 10px;
		line-height: 12px;
	}

	.active .sub {
		color: #fff;
	}

	.bare {
		display: flex;
		align-items: center;
		margin-left: 8px;
	}

	/* news */
	.news {
		flex: 0 0 246px;
		display: flex;
		flex-direction: column;
		background: #1d1c20;
	}

	.feed {
		flex: 1;
		min-height: 0;
		display: flex;
		overflow: hidden;
	}

	.articles {
		flex: 1;
		padding: 9px 0 0 5px;
	}

	article {
		padding-bottom: 9px;
	}

	h2 {
		margin: 0 0 9px;
		color: #fff;
		font-size: 17px;
		font-weight: 400;
		line-height: 18px;
		-webkit-text-stroke: 0.3px;
	}

	.meta {
		display: flex;
		justify-content: space-between;
		margin: 0;
		padding-right: 10px;
		color: #5d5d5f;
	}

	.source {
		width: 184px;
	}

	.scrollbar {
		flex: 0 0 10px;
		height: 243px;
		border-radius: 5px;
		background: #26252a;
	}

	/* center */
	.center {
		flex: 1;
		min-width: 0;
		display: flex;
		flex-direction: column;
		gap: 5px;
		margin: 0 5px;
	}

	.panel {
		flex: 1;
		min-height: 0;
		display: flex;
		flex-direction: column;
		background: #1d1c20;
	}

	.plot {
		position: relative;
		flex: 1;
		min-height: 0;
	}

	.plot-svg {
		display: block;
		width: 100%;
		height: 100%;
	}

	.wm {
		fill: #2b2a2f;
		text-anchor: middle;
	}

	.wm.big {
		font-size: 180px;
	}

	.wm.small {
		font-size: 60px;
	}

	.axis {
		fill: #ccc;
		font-size: 10px;
		stroke: #ccc;
		stroke-width: 0.2px;
	}

	.mid {
		text-anchor: middle;
	}

	.axis.tag {
		fill: #444;
		stroke: none;
	}

	.axis.hot {
		fill: #fff;
		stroke: none;
		font-weight: 700;
	}

	.grid {
		stroke: #252427;
	}

	.divide {
		stroke: #434246;
	}

	.session {
		stroke: #323136;
		stroke-width: 2;
	}

	.pin,
	.mark {
		fill: #343338;
	}

	.b {
		fill: #0099d4;
	}

	.r {
		fill: #b83122;
	}

	.g {
		fill: #999;
	}

	.vwap {
		fill: none;
		stroke: #ffcc00;
	}

	.last {
		stroke: #999;
		stroke-dasharray: 3 2;
	}

	.overlay {
		position: absolute;
		top: 0;
		left: 5px;
		display: flex;
		font-size: 10px;
		line-height: 12px;
		color: #aaa;
	}

	.overlay b {
		font-weight: 400;
		color: #ddd;
		margin-right: 3px;
	}

	dl {
		margin: 0;
	}

	dd {
		margin: 0;
		text-align: right;
	}

	.quote {
		display: grid;
		grid-template-columns: 15px 47px;
		padding: 7px 0 0 4px;
		color: #ccc;
		-webkit-text-stroke: 0.2px;
	}

	.quote small {
		font-size: 9px;
		color: #777;
	}

	.range {
		margin-top: 6px;
	}

	.legend {
		flex-direction: column;
		padding-left: 4px;
		background: rgba(29, 28, 32, 0.8);
	}

	.prime {
		top: 82px;
		width: 138px;
	}

	.volume {
		top: 284px;
		width: 160px;
		background: none;
	}

	.legend-head {
		display: flex;
		align-items: center;
		height: 15px;
		white-space: nowrap;
	}

	.second {
		margin-top: 3px;
	}

	.swatch {
		width: 11px;
		height: 11px;
		margin-right: 4px;
		border-radius: 1px;
		background: #999;
	}

	.gold {
		background: #ffcc00;
	}

	.blue {
		background: #0090c8;
	}

	.mini {
		width: 15px;
		height: 15px;
		margin-left: 5px;
		display: flex;
		align-items: center;
		justify-content: center;
		background: #222126;
		color: #666c70;
	}

	.mini + .mini {
		margin-left: 2px;
	}

	.legend-date {
		margin: 3px 0 1px 16px;
	}

	.values {
		display: grid;
		grid-template-columns: 40px 47px;
		margin-left: 16px;
	}

	.values.wide {
		grid-template-columns: 40px 66px;
		margin-top: 3px;
	}

	.values.amber {
		margin-top: 3px;
	}

	.loss dd {
		color: #b83122;
	}

	.amber dd {
		color: #ffcc00;
		font-weight: 700;
	}

	.cyan {
		color: #0099d4;
	}

	.study {
		gap: 2px;
		margin: 4px 0 0;
		color: #999;
		font-size: 13px;
		line-height: 18px;
	}

	/* toolbars */
	.bar {
		display: flex;
		flex: 0 0 36px;
		box-sizing: border-box;
		align-items: center;
		gap: 3px;
		padding: 0 1px;
		border-top: 1px solid #222225;
	}

	.bar.top {
		flex-basis: 35px;
		border-top: 0;
	}

	.btn {
		display: flex;
		align-items: center;
		justify-content: center;
		gap: 3px;
		min-width: 26px;
		height: 29px;
		box-sizing: border-box;
		padding: 0 4px;
		border-radius: 2px;
		background: #222126;
		color: #7b8287;
	}

	.btn.drop {
		gap: 3px;
	}

	.square {
		width: 29px;
	}

	.field {
		width: 120px;
		height: 29px;
		box-sizing: border-box;
		padding: 0 6px;
		border-radius: 2px;
		background: #28282a;
		color: #7b8287;
	}

	.stat {
		margin-left: 5px;
		color: #ccc;
	}

	.stat + .stat {
		margin-left: 18px;
	}

	.stat span,
	.stat strong {
		margin-left: 2px;
	}

	.stat strong {
		color: #fff;
	}

	.filters {
		justify-content: flex-end;
		padding-right: 3px;
		border-top: 0;
	}

	/* options */
	.expiries {
		display: grid;
		grid-template-columns: repeat(10, 1fr) 35px;
		flex: 0 0 35px;
	}

	.expiry {
		display: flex;
		flex-direction: column;
		align-items: center;
		justify-content: flex-start;
		font-size: 10px;
		line-height: 9px;
	}

	.days {
		font-size: 13px;
		line-height: 16px;
	}

	.current {
		background: #2a2a33;
	}

	.current .days {
		color: #fff;
		-webkit-text-stroke: 0.3px;
	}

	.expiry-more {
		display: flex;
		align-items: center;
		justify-content: center;
	}

	.chain-wrap {
		flex: 1;
		min-height: 0;
		display: flex;
		overflow: hidden;
		border-top: 1px solid #252528;
	}

	.chain {
		flex: 1;
		width: 100%;
		table-layout: fixed;
		border-spacing: 0;
		color: #ccc;
	}

	.first {
		width: 113px;
	}

	.narrow {
		width: 68px;
	}

	.chain th {
		height: 23px;
		padding: 0;
		border: solid #252528;
		border-width: 0 1px 1px 0;
		font-weight: 400;
	}

	.chain .sides th {
		height: 24px;
		padding-left: 3px;
		text-align: left;
		font-weight: 700;
	}

	.sides .calls {
		border-right: 0;
		color: #55aa55;
	}

	.sides .puts {
		color: #b83122;
	}

	.chain td {
		height: 21px;
		padding: 0 2px;
		border: solid #252528;
		border-width: 0 1px 1px 0;
		text-align: right;
		line-height: 21px;
	}

	.chain .peek td {
		height: 3px;
	}

	.chain td.bid {
		color: #55aa55;
	}

	.chain td.ask {
		color: #b83122;
	}

	.chain td.vol {
		color: #fff;
		font-weight: 700;
	}

	.chain td.strike {
		border-color: #28282c;
		background: #28282c;
		color: #fff;
		font-weight: 700;
		text-align: center;
	}

	.chain td.busy {
		background: #2b2b1d;
	}

	.chain .tail td {
		background: #19181b;
	}

	.chain .atm td {
		color: #fff;
		font-weight: 700;
	}

	.atm .call {
		background: #3b7a3b;
	}

	.atm .put {
		background: #7b2015;
	}

	.chain .atm .strike {
		background: #4d4d4d;
	}

	.thumb {
		flex: 0 0 10px;
		height: 17px;
		margin-top: 155px;
		border-radius: 5px;
		background: #28282c;
	}

	.interest {
		display: block;
		width: 100%;
	}

	.up,
	.down {
		fill: none;
		stroke: #55aa55;
	}

	.down {
		stroke: #b83122;
	}

	.dash {
		stroke-dasharray: 3 1;
	}

	/* price ladder */
	.dom {
		flex: 0 0 375px;
		display: flex;
		flex-direction: column;
		background: #1d1c20;
	}

	.account {
		flex: 0 0 36px;
		box-sizing: border-box;
		padding: 10px 10px 6px;
		border-bottom: 1px solid #222225;
	}

	.redacted {
		width: 96px;
		height: 19px;
		background: #000;
	}

	.dom-body {
		flex: 1;
		min-height: 0;
		display: flex;
		overflow: hidden;
		background: #1d1e22;
	}

	.ladder-wrap {
		flex: 0 0 270px;
	}

	/* scrolled part of the way into its first row */
	.ladder {
		width: 100%;
		margin-top: -16px;
		table-layout: fixed;
		border-spacing: 0;
		background: #0d0e10;
		color: #c4c4c4;
		font-size: 16px;
	}

	.w32 {
		width: 32px;
	}

	.w40 {
		width: 40px;
	}

	.ladder td {
		height: 27px;
		box-sizing: border-box;
		padding: 0;
		border-top: 1px solid #25262a;
		line-height: 24px;
	}

	.ladder .below td {
		background: #2f3033;
		border-top-color: #202124;
	}

	.ladder .bidq,
	.ladder .below .bidq {
		padding-right: 1px;
		border-top-color: #468f47;
		background: #55aa55;
		color: #fff;
		text-align: right;
	}

	.ladder .askq,
	.ladder .below .askq {
		padding-left: 1px;
		border-top-color: #96281c;
		background: #b83122;
		color: #fff;
	}

	.ladder .high td {
		border-top: 2px solid #0090c8;
	}

	.ladder .split td {
		border-top: 2px solid #999;
	}

	.ladder .low td {
		border-top: 2px solid #b83122;
	}

	.ladder .price {
		padding-right: 4px;
		text-align: center;
	}

	.ladder .traded,
	.ladder .below .traded {
		background-image: linear-gradient(#c4c4c4, #c4c4c4);
		background-position: 1px 7px;
		background-repeat: no-repeat;
		background-size: 3px 13px;
	}

	.price.box {
		box-shadow: inset 0 0 0 1px #fff;
	}

	.recent span {
		position: relative;
	}

	.recent span::after {
		content: '';
		position: absolute;
		top: 8px;
		left: 38px;
		width: 4px;
		height: 4px;
		background: #c4c4c4;
	}

	.ticket {
		flex: 1;
		display: flex;
		flex-direction: column;
		gap: 5px;
		padding: 188px 5px 0;
	}

	.order {
		height: 28px;
		border-radius: 2px;
		color: #fff;
		font-size: 10px;
		line-height: 12px;
		-webkit-text-stroke: 0.3px;
	}

	.order strong {
		display: block;
		font-size: 13px;
		-webkit-text-stroke: 0;
	}

	.buy {
		background: #55aa55;
	}

	.sell {
		background: #b83122;
	}

	.tall {
		height: 76px;
		margin-bottom: 1px;
	}

	.facts {
		display: flex;
		flex-direction: column;
		gap: 1px;
		margin-bottom: 1px;
		font-size: 10px;
		line-height: 10px;
		text-align: center;
	}

	.facts div {
		display: flex;
		flex-direction: column;
		background: #232428;
	}

	.facts div:last-child {
		padding: 1px 0;
	}

	.neg {
		color: #b83122;
	}

	.lots,
	.combo,
	.row {
		display: flex;
		height: 24px;
	}

	.row {
		gap: 4px;
	}

	.step {
		width: 12px;
		display: flex;
		align-items: center;
		justify-content: center;
		background: #232428;
	}

	.raise .icon {
		transform: rotate(180deg);
	}

	.lots-box {
		flex: 1;
		display: flex;
		flex-direction: column;
		background: #28282a;
		text-align: center;
	}

	.lots-box input {
		width: 100%;
		height: 14px;
		line-height: 14px;
		text-align: center;
	}

	.lots-box label {
		font-size: 10px;
		line-height: 9px;
	}

	.cell {
		flex: 1;
		display: flex;
		align-items: center;
		justify-content: center;
		gap: 5px;
		border-radius: 2px;
		background: #232428;
	}

	.main {
		flex: 1;
		box-sizing: border-box;
		border: 1px solid #222327;
	}

	.half {
		flex: 1;
		display: flex;
		align-items: center;
		justify-content: center;
		background: #232428;
	}

	.half.dim {
		color: #555a5e;
		background: #212226;
	}

	/* drawing tools */
	.tools {
		flex: 0 0 35px;
		display: flex;
		flex-direction: column;
		gap: 12px;
		margin: 0 3px 0 2px;
	}

	.tool-group {
		display: flex;
		flex-direction: column;
		gap: 2px;
	}

	.tool {
		height: 35px;
		display: flex;
		align-items: center;
		justify-content: center;
		border-radius: 2px;
		background: #1e1e1f;
	}

	.tool.more {
		background: linear-gradient(45deg, #55585a 3px, #1e1e1f 3px);
	}

	.letter {
		font-size: 24px;
	}

	.faint {
		color: #5c6165;
	}
</style>
